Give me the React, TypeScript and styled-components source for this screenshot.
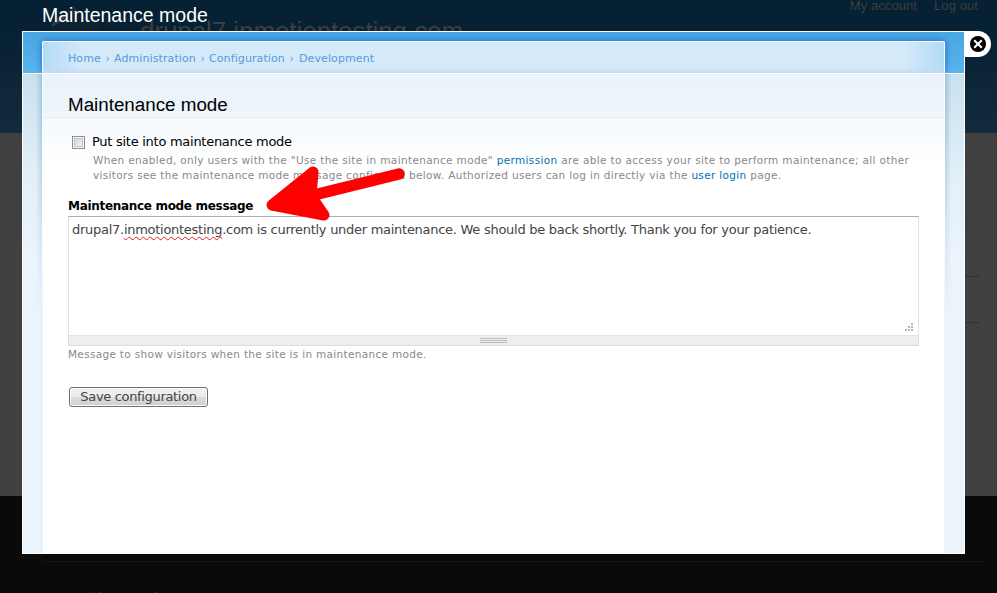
import React from 'react';
import styled, { createGlobalStyle } from 'styled-components';

const GlobalStyle = createGlobalStyle`
  * { box-sizing: border-box; }
  html, body { margin: 0; padding: 0; overflow: hidden; }
`;

const Page = styled.div`
  position: relative;
  display: flex;
  flex-direction: column;
  width: 997px;
  height: 593px;
  overflow: hidden;
  background: #404040;
  font-family: 'DejaVu Sans', sans-serif;
  white-space: nowrap;
`;

const SiteHeader = styled.header`
  display: flex;
  justify-content: space-between;
  height: 133px;
  padding: 0 19px 0 48px;
  background: linear-gradient(#052133 0, #062133 30px, #10293a 110px, #122a3a 133px);
  color: #3c3e40;
  font-family: 'Liberation Sans', Arial, sans-serif;
`;

const Brand = styled.div`
  display: flex;
  gap: 32px;
`;

const SiteName = styled.div`
  padding-top: 15px;
  font-size: 26px;
  line-height: 32px;
  letter-spacing: -0.08px;
`;

const AccountLinks = styled.nav`
  display: flex;
  gap: 17px;
  height: 16px;
  margin-top: -2px;
  font-size: 13px;
  line-height: 16px;
  letter-spacing: 0.08px;
`;

const SiteBody = styled.section`
  flex: 1;
  display: flex;
  flex-direction: column;
  align-items: flex-end;
  padding: 143px 18px 0 0;
`;

const Rule = styled.div`
  width: 300px;
  height: 46px;
  border-top: 1px solid #303030;
`;

const SiteFooter = styled.footer`
  display: flex;
  flex-direction: column;
  height: 97px;
  padding: 65px 13px 0 44px;
  background: #0a0a0a;
  color: #343434;
  font-size: 12px;
  line-height: 16px;
`;

const FooterRule = styled.div`
  height: 1px;
  flex: none;
  background: #151515;
  margin-bottom: 28px;
`;

const DialogTitle = styled.h1`
  position: absolute;
  left: 42px;
  top: 3px;
  margin: 0;
  color: #fff;
  font: 400 19.5px/24px 'Liberation Sans', Arial, sans-serif;
`;

const CloseTab = styled.button`
  position: absolute;
  left: 965px;
  top: 31px;
  width: 26px;
  height: 26px;
  padding: 5px;
  border: 0;
  border-radius: 0 13px 13px 0;
  background: #fff;
  line-height: 0;
`;

const Dialog = styled.div`
  position: absolute;
  left: 22px;
  top: 31px;
  width: 943px;
  height: 523px;
  display: flex;
  flex-direction: column;
  border: 1px solid #fff;
  background: #ebf3fb;
`;

const DialogTop = styled.div`
  flex: none;
  height: 41px;
  padding: 9px 19px 0;
  background: linear-gradient(#4aa5e0, #59b4ee);
  overflow: hidden;
`;

const Breadcrumb = styled.nav`
  display: flex;
  height: 32px;
  padding: 9px 0 0 25px;
  border: 1px solid #fff;
  border-bottom: 0;
  border-radius: 2px 2px 0 0;
  box-shadow: 0 0 7px #1769cf;
  background:
    linear-gradient(transparent 25px, #c4daf4 31px),
    linear-gradient(90deg, #b3dbf5, #d4eaf9 41px, #d4eaf9 860px, #b3dbf5);
  color: #559bdc;
  font-size: 11px;
  line-height: 15px;
  letter-spacing: 0.1px;
  word-spacing: 1px;
`;

const Crumb = styled.a<{ $w: number }>`
  width: ${p => p.$w}px;
  flex: none;
`;

const DialogMain = styled.div`
  flex: 1;
  display: flex;
  border-top: 1px solid #fff;
  overflow: hidden;
  padding: 0 19px;
  background: linear-gradient(#c9e0ed, #d5e8f4 50px, #e3eff7 100px, #ebf3fb 180px);
`;

const Content = styled.main`
  position: relative;
  flex: 1;
  display: flex;
  flex-direction: column;
  background: linear-gradient(#fff 150px, #ebf3fb 240px);
`;

const SideShade = styled.div<{ $side: 'left' | 'right' }>`
  position: absolute;
  ${p => p.$side}: -6px;
  top: 0;
  width: 6px;
  height: 250px;
  background: linear-gradient(to ${p => p.$side}, #82b4d1a0, #82b4d100);
  mask-image: linear-gradient(#000 20px, transparent 240px);
  pointer-events: none;
`;

const TitleBar = styled.div`
  height: 44px;
  padding: 19px 0 0 25px;
  margin: 0 1px;
  border-bottom: 1px solid #e5ecef;
  background: linear-gradient(#eaf3fb, #ebf3fb 26px, #f0f6f9);
  flex: none;
`;

const Heading = styled.h2`
  margin: 0;
  color: #000;
  font: 400 18.8px/24px 'Liberation Sans', Arial, sans-serif;
`;

const Form = styled.form`
  flex: 1;
  display: flex;
  flex-direction: column;
  margin: 0 1px;
  padding: 16px 25px 0;
  background: linear-gradient(#f4f9fc, #fff 44px);
`;

const CheckRow = styled.label`
  display: flex;
  align-items: flex-start;
  gap: 7px;
  height: 19px;
  padding-left: 4px;
  color: #000;
  font-size: 13px;
  line-height: 16px;
`;

const CheckBox = styled.span`
  width: 13px;
  height: 13px;
  margin-top: 2px;
  border: 1px solid #8e8f8f;
  background: linear-gradient(135deg, #cbcfd5, #f7f7f7);
  box-shadow: inset 0 0 0 1px #f4f4f4, inset 0 0 0 2px #c2c5ca;
`;

const Text = styled.span<{ $ls?: number }>`
  letter-spacing: ${p => p.$ls ?? 0}px;
`;

const Help = styled.div<{ $indent?: number }>`
  display: flex;
  flex-direction: column;
  padding-left: ${p => p.$indent ?? 0}px;
  color: #898989;
  font-size: 10.5px;
  line-height: 15px;
`;

const Link = styled.a`
  color: #0071b8;
`;

const FieldLabel = styled.div`
  margin-top: 15px;
  height: 18px;
  color: #000;
  font-size: 12px;
  font-weight: 700;
  line-height: 16px;
`;

const TextArea = styled.div`
  display: flex;
  justify-content: space-between;
  width: 851px;
  height: 119px;
  padding: 5px 4px 4px 3px;
  border: 1px solid #dde1e8;
  border-top-color: #abadb3;
  border-bottom: 0;
  background: #fff;
  color: #444;
  font-size: 13px;
  line-height: 16px;
`;

const Misspelled = styled.span`
  text-decoration: underline wavy #e32222 1px;
  text-underline-offset: 2px;
  text-decoration-skip-ink: none;
`;

const Corner = styled.svg`
  align-self: flex-end;
  flex: none;
`;

const Grippie = styled.div`
  display: flex;
  justify-content: center;
  width: 851px;
  height: 11px;
  flex: none;
  padding-top: 2px;
  border: 1px solid #ddd;
  border-top-color: #e1e3ea;
  background: #eee;
`;

const GripLines = styled.div`
  width: 27px;
  height: 5px;
  background: repeating-linear-gradient(#b9bdbb 0 1px, #eee 1px 2px);
`;

const HelpBelow = styled(Help)`
  padding-top: 1px;
`;

const SaveButton = styled.button`
  width: 139px;
  height: 20px;
  margin: 25px 0 0 1px;
  padding: 0;
  border: 1px solid #707070;
  border-radius: 3px;
  background: linear-gradient(#f2f2f2, #ebebeb 49%, #dddddd 50%, #cfcfcf);
  box-shadow: inset 0 0 0 1px #fafafa;
  color: #444;
  font: 13px/18px 'DejaVu Sans', sans-serif;
`;

const Arrow = styled.svg`
  position: absolute;
  left: 260px;
  top: 160px;
  pointer-events: none;
`;

export default function App() {
  return (
    <>
      <GlobalStyle />
      <Page>
        <SiteHeader>
          <Brand>
            <svg width="60" height="60" viewBox="0 0 60 60">
              <path d="M3 25C9 15 17 15 24 6C29 10 34 16 42 18C49 21 53 26 54 32H3Z" fill="#0c2231" />
              <path d="M3 27C5 20 14 17 19 13C17 20 13 22 3 27Z" fill="#303c43" />
              <path d="M21 13L26 5L30 11Z" fill="#192a35" />
              <path d="M41 18Q49 21 54 32" fill="none" stroke="#192027" strokeWidth="1.5" />
            </svg>
            <SiteName>drupal7.inmotiontesting.com</SiteName>
          </Brand>
          <AccountLinks><a>My account</a><a>Log out</a></AccountLinks>
        </SiteHeader>
        <SiteBody><Rule /><Rule /></SiteBody>
        <SiteFooter><FooterRule /><span>Powered by Drupal</span></SiteFooter>

        <DialogTitle>Maintenance mode</DialogTitle>
        <Dialog role="dialog">
          <DialogTop>
            <Breadcrumb>
              <Crumb $w={46}>Home ›</Crumb>
              <Crumb $w={95}>Administration ›</Crumb>
              <Crumb $w={90}>Configuration ›</Crumb>
              <Crumb $w={90}>Development</Crumb>
            </Breadcrumb>
          </DialogTop>
          <DialogMain>
            <Content>
              <SideShade $side="left" />
              <SideShade $side="right" />
              <TitleBar><Heading>Maintenance mode</Heading></TitleBar>
              <Form>
                <CheckRow><CheckBox /><Text $ls={-0.27}>Put site into maintenance mode</Text></CheckRow>
                <Help $indent={25}>
                  <Text $ls={0.35}>When enabled, only users with the "Use the site in maintenance mode" <Link>permission</Link> are able to access your site to perform maintenance; all other</Text>
                  <Text $ls={0.33}>visitors see the maintenance mode message configured below. Authorized users can log in directly via the <Link>user login</Link> page.</Text>
                </Help>
                <FieldLabel><Text $ls={-0.31}>Maintenance mode message</Text></FieldLabel>
                <TextArea>
                  <Text $ls={-0.275}>drupal7.<Misspelled>inmotiontesting</Misspelled>.com is currently under maintenance. We should be back shortly. Thank you for your patience.</Text>
                  <Corner width="9" height="8" viewBox="0 0 9 8" fill="#b5b5b5">
                    <path d="M6 0h2v2H6zM3 3h2v2H3zM6 3h2v2H6zM0 6h2v2H0zM3 6h2v2H3zM6 6h2v2H6z" />
                  </Corner>
                </TextArea>
                <Grippie><GripLines /></Grippie>
                <HelpBelow><Text $ls={0.31}>Message to show visitors when the site is in maintenance mode.</Text></HelpBelow>
                <SaveButton type="button"><Text $ls={-0.33}>Save configuration</Text></SaveButton>
              </Form>
            </Content>
          </DialogMain>
        </Dialog>
        <CloseTab aria-label="Close">
          <svg width="16" height="16" viewBox="0 0 16 16">
            <circle cx="8" cy="8" r="8" fill="#000" />
            <path d="M4.2 4.2L11.8 11.8M11.8 4.2L4.2 11.8" stroke="#fff" strokeWidth="2" />
          </svg>
        </CloseTab>
        <Arrow width="150" height="65" viewBox="0 0 150 65" fill="red" stroke="red" strokeLinejoin="round" strokeLinecap="round">
          <path d="M12 45L53 12L51 36L64 55Z" strokeWidth="11" />
          <path d="M50 36L139 14" strokeWidth="11.5" />
        </Arrow>
      </Page>
    </>
  );
}
